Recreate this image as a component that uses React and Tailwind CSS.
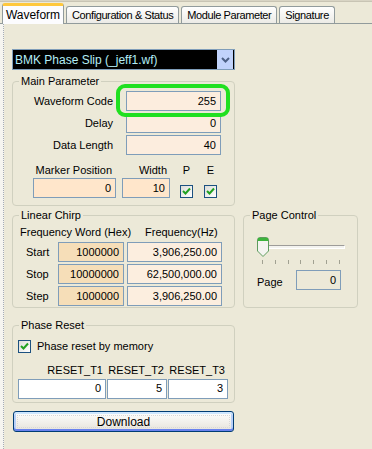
import React from "react";

const FONT = "font-['Liberation_Sans',Arial,sans-serif]";

function Field({ value, className = "" }) {
  return (
    <div
      className={`h-[20px] flex items-center justify-end pr-[4px] border border-[#7F9DB9] ${className}`}
    >
      {value}
    </div>
  );
}

function Check() {
  return (
    <div className="w-[13px] h-[13px] border border-[#1C5180] bg-gradient-to-br from-[#DCDCD7] to-white flex items-center justify-center">
      <svg width="9" height="9" viewBox="0 0 9 9">
        <path d="M1 4 L3.5 6.5 L8 1.5" fill="none" stroke="#21A121" strokeWidth="2" />
      </svg>
    </div>
  );
}

function Group({ title, className = "", children }) {
  return (
    <fieldset className={`border border-[#D0D0BF] rounded-[4px] ${className}`}>
      <legend className="ml-[6px] px-[2px] leading-[13px]">{title}</legend>
      {children}
    </fieldset>
  );
}

function Tab({ label, active }) {
  if (active) {
    return (
      <div className="w-[62px] h-[21px] mb-[-1px] bg-[#FCFCFE] border-x border-[#919B9C] border-t-[3px] border-t-[#FFC83C] rounded-t-[3px] flex items-center justify-center text-[12px] relative z-10">
        {label}
      </div>
    );
  }
  return (
    <div className="h-[17px] px-[5px] bg-gradient-to-b from-white to-[#ECEBE6] border border-b-0 border-[#919B9C] rounded-t-[3px] flex items-center justify-center ml-[2px] tracking-[-0.4px]">
      {label}
    </div>
  );
}

export default function App() {
  return (
    <div className={`w-[372px] h-[449px] bg-[#ECE9D8] text-[11px] text-black overflow-hidden ${FONT}`}>
      {/* top strip + tabs */}
      <div className="h-[2px] bg-[#D8D4C4] border-b border-[#C8C4B4]" />
      <div className="h-[22px] flex items-end pl-[2px] border-b border-[#919B9C]">
        <Tab label="Waveform" active />
        <Tab label="Configuration & Status" />
        <Tab label="Module Parameter" />
        <Tab label="Signature" />
      </div>

      <div className="flex h-[425px]">
        <div className="w-[4px] bg-[#F6F5F0] border-r border-dotted border-[#A5ACB5]" />
        <div className="flex-1 pl-[8px] pt-[25px]">
          {/* dropdown */}
          <div className="w-[223px] h-[21px] border border-[#7F9DB9] bg-black flex items-center">
            <span className="flex-1 pl-[2px] text-[12px] text-[#B4EEF6]">BMK Phase Slip (_jeff1.wf)</span>
            <div className="w-[16px] h-[19px] mr-px bg-[#C1D3FB] flex items-center justify-center">
              <svg width="9" height="6" viewBox="0 0 9 6">
                <path d="M1 1 L4.5 4.5 L8 1" fill="none" stroke="#4D6185" strokeWidth="2" />
              </svg>
            </div>
          </div>

          {/* Main Parameter */}
          <Group title="Main Parameter" className="w-[223px] h-[131px] mt-[5px]">
            <div className="flex flex-col gap-[2px] mt-[3px]">
              <div className="flex items-center">
                <span className="w-[100px] text-right">Waveform Code</span>
                <div className="relative ml-[13px]">
                  <Field value="255" className="w-[95px] bg-[#FCEDDE]" />
                  <span className="absolute -left-[10px] -right-[9px] -top-[7px] -bottom-[6px] border-[4px] border-[#20E020] rounded-[9px]" />
                </div>
              </div>
              <div className="flex items-center">
                <span className="w-[100px] text-right">Delay</span>
                <Field value="0" className="w-[95px] ml-[13px] bg-[#FCEDDE]" />
              </div>
              <div className="flex items-center">
                <span className="w-[100px] text-right">Data Length</span>
                <Field value="40" className="w-[95px] ml-[13px] bg-[#FCEDDE]" />
              </div>
            </div>
            <div className="flex mt-[9px] pl-[20px]">
              <div className="flex flex-col items-end w-[83px]">
                <span className="leading-[13px] mr-[4px]">Marker Position</span>
                <Field value="0" className="w-[83px] mt-[1px] bg-[#FFE6CB]" />
              </div>
              <div className="flex flex-col items-end w-[48px] ml-[6px]">
                <span className="leading-[13px] mr-[3px]">Width</span>
                <Field value="10" className="w-[48px] mt-[1px] bg-[#FFE6CB]" />
              </div>
              <div className="flex flex-col items-center w-[13px] ml-[10px]">
                <span className="leading-[13px]">P</span>
                <div className="mt-[8px]"><Check /></div>
              </div>
              <div className="flex flex-col items-center w-[13px] ml-[11px]">
                <span className="leading-[13px]">E</span>
                <div className="mt-[8px]"><Check /></div>
              </div>
            </div>
          </Group>

          <div className="flex mt-[3px]">
            {/* Linear Chirp */}
            <Group title="Linear Chirp" className="w-[223px] h-[99px]">
              <div className="flex pl-[7px] mt-[3px] leading-[14px]">
                <span className="w-[125px]">Frequency Word (Hex)</span>
                <span>Frequency(Hz)</span>
              </div>
              <div className="flex flex-col gap-[2px] mt-[3px]">
                {[
                  ["Start", "1000000", "3,906,250.00"],
                  ["Stop", "10000000", "62,500,000.00"],
                  ["Step", "1000000", "3,906,250.00"],
                ].map(([l, h, f]) => (
                  <div key={l} className="flex items-center">
                    <span className="w-[45px] pl-[13px]">{l}</span>
                    <Field value={h} className="w-[66px] bg-[#F6DEB8]" />
                    <Field value={f} className="w-[95px] ml-[3px] bg-[#FCEEDF]" />
                  </div>
                ))}
              </div>
            </Group>

            {/* Page Control */}
            <Group title="Page Control" className="w-[115px] h-[99px] ml-[8px]">
              <div className="pl-[13px] mt-[15px]">
                <div className="flex items-center h-[20px]">
                  <div className="w-[12px] h-[20px] relative z-10">
                    <svg width="12" height="20" viewBox="0 0 12 20">
                      <path d="M0.5 3 Q0.5 0.5 3 0.5 L9 0.5 Q11.5 0.5 11.5 3 L11.5 14 L6 19.5 L0.5 14 Z" fill="#F4F4F0" stroke="#5E9C5E" />
                      <rect x="1" y="1" width="10" height="3" fill="#3CB43C" />
                    </svg>
                  </div>
                  <div className="w-[82px] h-[4px] -ml-[6px] border border-[#9D9C99] border-r-white border-b-white bg-[#F3F3EF]" />
                </div>
                <div className="flex justify-between w-[78px] ml-[5px] mt-[3px]">
                  {[0, 1, 2, 3, 4, 5, 6].map((i) => (
                    <span key={i} className="w-px h-[4px] bg-[#A1A192]" />
                  ))}
                </div>
                <div className="flex items-center mt-[6px]">
                  <span className="w-[39px] pt-[4px]">Page</span>
                  <Field value="0" className="w-[45px] h-[19px] bg-[#ECE9D8]" />
                </div>
              </div>
            </Group>
          </div>

          {/* Phase Reset */}
          <Group title="Phase Reset" className="w-[223px] h-[84px] mt-[11px]">
            <div className="flex items-center pl-[5px] mt-[6px]">
              <Check />
              <span className="ml-[6px]">Phase reset by memory</span>
            </div>
            <div className="flex pl-[5px] mt-[9px] leading-[13px]">
              <span className="w-[89px] text-right pr-[4px]">RESET_T1</span>
              <span className="w-[61px] text-right pr-[4px]">RESET_T2</span>
              <span className="w-[61px] text-right pr-[4px]">RESET_T3</span>
            </div>
            <div className="flex pl-[5px] mt-[2px] gap-[1px]">
              <Field value="0" className="w-[88px] bg-white" />
              <Field value="5" className="w-[60px] bg-white" />
              <Field value="3" className="w-[60px] bg-white" />
            </div>
          </Group>

          {/* Download */}
          <button className="w-[221px] h-[21px] mt-[8px] ml-px p-[3px] border border-[#003C74] rounded-[3px] bg-gradient-to-b from-[#FFFFFF] to-[#E6E3DA] shadow-[inset_0_2px_0_#CEE7FF,inset_0_-2px_0_#6982EE,inset_2px_0_0_#B8D0F8,inset_-2px_0_0_#B8D0F8] text-[12px] flex">
            <span className="flex-1 flex items-center justify-center border border-dotted border-[#D8D8D8]">Download</span>
          </button>
        </div>
      </div>
    </div>
  );
}
